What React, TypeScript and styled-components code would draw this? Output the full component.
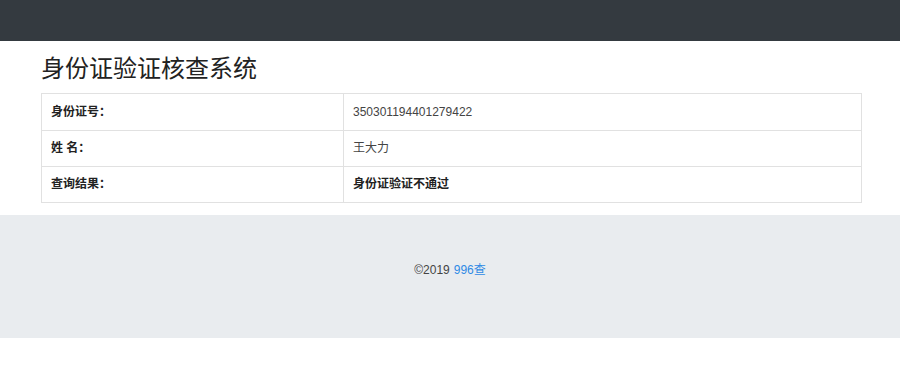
import React from 'react';
import styled, { createGlobalStyle } from 'styled-components';

const GlobalStyle = createGlobalStyle`
  html, body {
    margin: 0;
    padding: 0;
    background: #ffffff;
    font-family: 'Liberation Sans', 'Noto Sans CJK SC', sans-serif;
    color: #333333;
  }
`;

const TopBar = styled.div`
  height: 41px;
  background-color: #343a40;
`;

const Main = styled.main`
  padding: 0 38px 12px 41px;
`;

const Title = styled.h1`
  margin: 13px 0 9px;
  font-size: 24px;
  line-height: 30px;
  font-weight: 400;
  color: #222222;
`;

const Table = styled.div`
  display: grid;
  grid-template-columns: 301px 1fr;
  border: 1px solid #e1e1e1;
`;

const Cell = styled.div<{ $first?: boolean; $head?: boolean; $strong?: boolean }>`
  padding: ${(p) => (p.$first ? '10px 9px 9px' : '9px')};
  font-size: 12px;
  line-height: 17px;
  border-top: ${(p) => (p.$first ? 'none' : '1px solid #e1e1e1')};
  border-left: ${(p) => (p.$head ? 'none' : '1px solid #e1e1e1')};
  font-weight: ${(p) => (p.$strong ? 700 : 400)};
  color: ${(p) => (p.$strong ? '#222222' : '#444444')};
`;

const Footer = styled.footer`
  height: 123px;
  box-sizing: border-box;
  padding-top: 47px;
  background-color: #e9ecef;
  display: flex;
  align-items: flex-start;
  justify-content: center;
  font-size: 12px;
  line-height: 17px;
  color: #444444;
`;

const Link = styled.a`
  color: #2f8ae5;
  text-decoration: none;
  margin-left: 4px;
`;

const rows = [
  { label: '身份证号：', value: '350301194401279422', strong: false },
  { label: '姓 名：', value: '王大力', strong: false },
  { label: '查询结果：', value: '身份证验证不通过', strong: true },
];

const App: React.FC = () => {
  return (
    <>
      <GlobalStyle />
      <TopBar />
      <Main>
        <Title>身份证验证核查系统</Title>
        <Table>
          {rows.map((r, i) => (
            <React.Fragment key={r.label}>
              <Cell $first={i === 0} $head $strong>
                {r.label}
              </Cell>
              <Cell $first={i === 0} $strong={r.strong}>
                {r.value}
              </Cell>
            </React.Fragment>
          ))}
        </Table>
      </Main>
      <Footer>
        <span>
          ©2019<Link href="#">996查</Link>
        </span>
      </Footer>
    </>
  );
};

export default App;
